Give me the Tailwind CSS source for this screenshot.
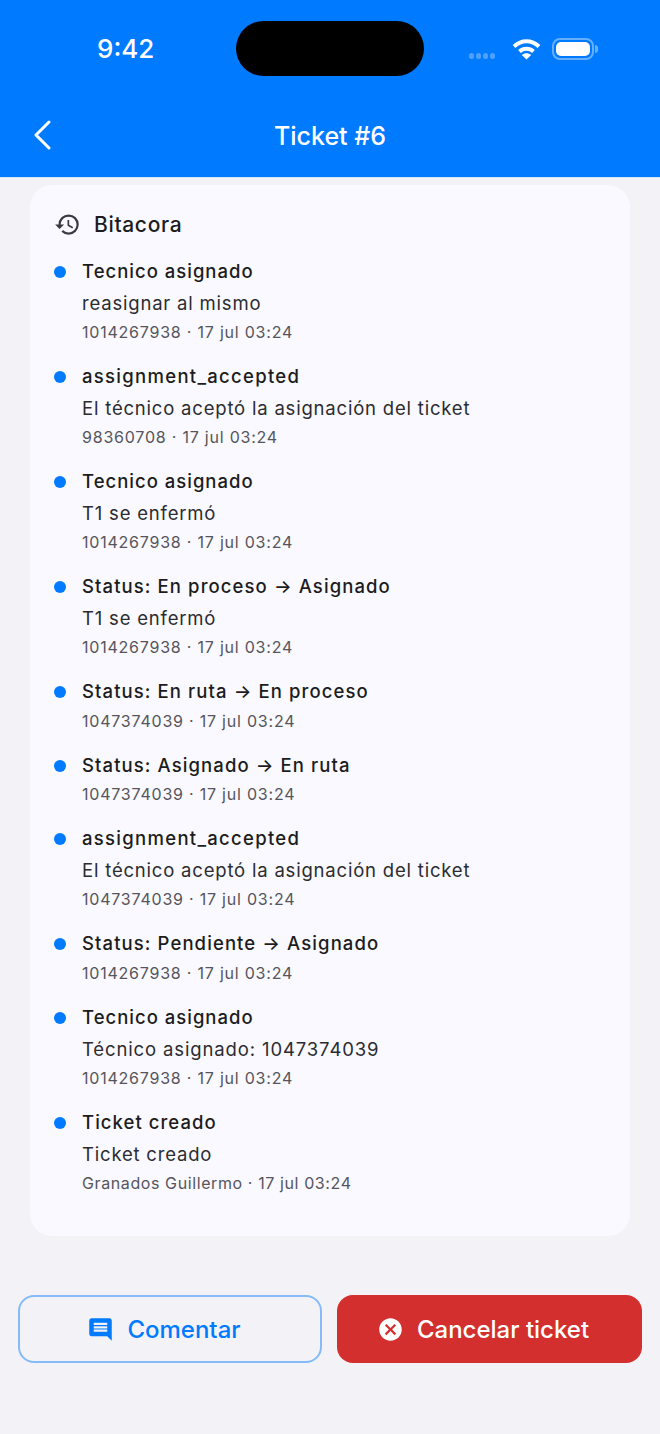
<!DOCTYPE html>
<html lang="es">
<head>
<meta charset="UTF-8">
<title>Ticket #6</title>
<script src="https://cdn.jsdelivr.net/npm/@tailwindcss/browser@4"></script>
</head>
<body class="w-[660px] h-[1434px] overflow-hidden bg-[#f2f2f7] font-['Inter',sans-serif]">
  <!-- header -->
  <header class="h-[178px] bg-[#007aff] border-b border-[#d5e6f7] text-white">
    <div class="relative h-[98px]">
      <span class="absolute left-[97px] top-[33px] text-[26px] leading-[32px] font-medium">9:42</span>
      <div class="absolute left-[236px] top-[21px] w-[188px] h-[55px] rounded-full bg-black"></div>
      <div class="absolute left-[469px] top-[53px] flex gap-[2px]">
        <span class="w-[5px] h-[6px] rounded-full bg-white/30"></span>
        <span class="w-[5px] h-[6px] rounded-full bg-white/30"></span>
        <span class="w-[5px] h-[6px] rounded-full bg-white/30"></span>
        <span class="w-[5px] h-[6px] rounded-full bg-white/30"></span>
      </div>
      <svg class="absolute left-[512px] top-[37px]" width="29" height="23" viewBox="0 0 29 23" fill="none" stroke="white" stroke-width="4">
        <path d="M2 9.5C9.5 2.5 19.5 2.5 27 9.5"/>
        <path d="M7.5 14.5C11.5 10.8 17.5 10.8 21.5 14.5"/>
        <path d="M14.5 22.5L9.8 18C12.5 15.8 16.5 15.8 19.2 18Z" fill="white" stroke="none"/>
      </svg>
      <div class="absolute left-[552px] top-[38px] w-[42px] h-[22px] rounded-[8px] border-2 border-white/40 p-[2px]">
        <div class="w-full h-full rounded-[5px] bg-white"></div>
      </div>
      <div class="absolute left-[595px] top-[45px] w-[3px] h-[8px] rounded-r-full bg-white/40"></div>
    </div>
    <div class="relative h-[60px] flex items-center justify-center pt-[15px]">
      <svg class="absolute left-[32px] top-[22px]" width="20" height="30" viewBox="0 0 20 30" fill="none" stroke="white" stroke-width="3" stroke-linecap="round" stroke-linejoin="round">
        <path d="M17 2L4 15L17 28"/>
      </svg>
      <h1 class="text-[25px] leading-[32px] font-medium">Ticket #6</h1>
    </div>
  </header>

  <main class="px-[30px] pt-[7px]">
    <section class="h-[1051px] rounded-[22px] bg-[#f9f9ff] pl-[24px] pr-[24px] pt-[26px]">
      <div class="flex items-center h-[27px] gap-[13px]">
        <svg class="w-[27px] h-[27px] text-[#3a3a3f]" viewBox="0 0 24 24" fill="currentColor">
          <path d="M13 3a9 9 0 0 0-9 9H1l3.89 3.89.07.14L9 12H6c0-3.87 3.13-7 7-7s7 3.13 7 7-3.13 7-7 7c-1.93 0-3.68-.79-4.94-2.06l-1.42 1.42A8.954 8.954 0 0 0 13 21a9 9 0 0 0 0-18zm-1 5v5l4.28 2.54.72-1.21-3.5-2.08V8H12z"/>
        </svg>
        <h2 class="text-[21px] leading-[27px] font-medium tracking-[0.65px] text-[#1c1c20]">Bitacora</h2>
      </div>

      <ul class="mt-[21px] flex flex-col gap-[21px] text-[#1c1c20]">
        <li class="flex">
          <span class="mt-[7px] w-[12px] h-[12px] rounded-full bg-[#007aff]"></span>
          <div class="ml-[16px]">
            <p class="text-[18.5px] leading-[24px] font-[550] tracking-[1px]">Tecnico asignado</p>
            <p class="mt-[8px] text-[18.5px] leading-[24px] tracking-[0.8px] text-[#2c2c30]">reasignar al mismo</p>
            <p class="mt-[6px] text-[16px] leading-[22px] tracking-[0.78px] text-[#55555b]">1014267938 · 17 jul 03:24</p>
          </div>
        </li>
        <li class="flex">
          <span class="mt-[7px] w-[12px] h-[12px] rounded-full bg-[#007aff]"></span>
          <div class="ml-[16px]">
            <p class="text-[18.5px] leading-[24px] font-[550] tracking-[1.3px]">assignment_accepted</p>
            <p class="mt-[8px] text-[18.5px] leading-[24px] tracking-[0.8px] text-[#2c2c30]">El técnico aceptó la asignación del ticket</p>
            <p class="mt-[6px] text-[16px] leading-[22px] tracking-[0.78px] text-[#55555b]">98360708 · 17 jul 03:24</p>
          </div>
        </li>
        <li class="flex">
          <span class="mt-[7px] w-[12px] h-[12px] rounded-full bg-[#007aff]"></span>
          <div class="ml-[16px]">
            <p class="text-[18.5px] leading-[24px] font-[550] tracking-[1px]">Tecnico asignado</p>
            <p class="mt-[8px] text-[18.5px] leading-[24px] tracking-[0.8px] text-[#2c2c30]">T1 se enfermó</p>
            <p class="mt-[6px] text-[16px] leading-[22px] tracking-[0.78px] text-[#55555b]">1014267938 · 17 jul 03:24</p>
          </div>
        </li>
        <li class="flex">
          <span class="mt-[7px] w-[12px] h-[12px] rounded-full bg-[#007aff]"></span>
          <div class="ml-[16px]">
            <p class="text-[18.5px] leading-[24px] font-[550] tracking-[1.1px]">Status: En proceso → Asignado</p>
            <p class="mt-[8px] text-[18.5px] leading-[24px] tracking-[0.8px] text-[#2c2c30]">T1 se enfermó</p>
            <p class="mt-[6px] text-[16px] leading-[22px] tracking-[0.78px] text-[#55555b]">1014267938 · 17 jul 03:24</p>
          </div>
        </li>
        <li class="flex">
          <span class="mt-[7px] w-[12px] h-[12px] rounded-full bg-[#007aff]"></span>
          <div class="ml-[16px]">
            <p class="text-[18.5px] leading-[24px] font-[550] tracking-[1.1px]">Status: En ruta → En proceso</p>
            <p class="mt-[6.7px] text-[16px] leading-[22px] tracking-[0.78px] text-[#55555b]">1047374039 · 17 jul 03:24</p>
          </div>
        </li>
        <li class="flex">
          <span class="mt-[7px] w-[12px] h-[12px] rounded-full bg-[#007aff]"></span>
          <div class="ml-[16px]">
            <p class="text-[18.5px] leading-[24px] font-[550] tracking-[1.1px]">Status: Asignado → En ruta</p>
            <p class="mt-[6.7px] text-[16px] leading-[22px] tracking-[0.78px] text-[#55555b]">1047374039 · 17 jul 03:24</p>
          </div>
        </li>
        <li class="flex">
          <span class="mt-[7px] w-[12px] h-[12px] rounded-full bg-[#007aff]"></span>
          <div class="ml-[16px]">
            <p class="text-[18.5px] leading-[24px] font-[550] tracking-[1.3px]">assignment_accepted</p>
            <p class="mt-[8px] text-[18.5px] leading-[24px] tracking-[0.8px] text-[#2c2c30]">El técnico aceptó la asignación del ticket</p>
            <p class="mt-[6px] text-[16px] leading-[22px] tracking-[0.78px] text-[#55555b]">1047374039 · 17 jul 03:24</p>
          </div>
        </li>
        <li class="flex">
          <span class="mt-[7px] w-[12px] h-[12px] rounded-full bg-[#007aff]"></span>
          <div class="ml-[16px]">
            <p class="text-[18.5px] leading-[24px] font-[550] tracking-[1.1px]">Status: Pendiente → Asignado</p>
            <p class="mt-[6.7px] text-[16px] leading-[22px] tracking-[0.78px] text-[#55555b]">1014267938 · 17 jul 03:24</p>
          </div>
        </li>
        <li class="flex">
          <span class="mt-[7px] w-[12px] h-[12px] rounded-full bg-[#007aff]"></span>
          <div class="ml-[16px]">
            <p class="text-[18.5px] leading-[24px] font-[550] tracking-[1px]">Tecnico asignado</p>
            <p class="mt-[7.5px] text-[18.5px] leading-[24px] tracking-[0.87px] text-[#2c2c30]">Técnico asignado: 1047374039</p>
            <p class="mt-[6.5px] text-[16px] leading-[22px] tracking-[0.78px] text-[#55555b]">1014267938 · 17 jul 03:24</p>
          </div>
        </li>
        <li class="flex">
          <span class="mt-[7px] w-[12px] h-[12px] rounded-full bg-[#007aff]"></span>
          <div class="ml-[16px]">
            <p class="text-[18.5px] leading-[24px] font-[550] tracking-[1.05px]">Ticket creado</p>
            <p class="mt-[7.5px] text-[18.5px] leading-[24px] tracking-[0.8px] text-[#2c2c30]">Ticket creado</p>
            <p class="mt-[6.5px] text-[16px] leading-[22px] tracking-[0.6px] text-[#55555b]">Granados Guillermo · 17 jul 03:24</p>
          </div>
        </li>
      </ul>
    </section>
  </main>

  <div class="mt-[59px] px-[18px] flex gap-[15px]">
    <button class="w-[304px] h-[68px] pr-[12px] pt-[1px] rounded-[16px] border-2 border-[#84bbf8] flex items-center justify-center gap-[13px] text-[#007aff]">
      <svg class="w-[27px] h-[27px]" viewBox="0 0 24 24" fill="currentColor">
        <path d="M21.99 4c0-1.1-.89-2-1.99-2H4c-1.1 0-2 .9-2 2v12c0 1.1.9 2 2 2h14l4 4-.01-18zM18 14H6v-2h12v2zm0-3H6V9h12v2zm0-3H6V6h12v2z"/>
      </svg>
      <span class="text-[24px] leading-[30px] font-medium">Comentar</span>
    </button>
    <button class="w-[305px] h-[68px] pr-[13px] pt-[1px] rounded-[16px] bg-[#d32f2f] flex items-center justify-center gap-[13px] text-white">
      <svg class="w-[27px] h-[27px]" viewBox="0 0 24 24" fill="currentColor">
        <path d="M12 2C6.47 2 2 6.47 2 12s4.47 10 10 10 10-4.47 10-10S17.53 2 12 2zm5 13.59L15.59 17 12 13.41 8.41 17 7 15.59 10.59 12 7 8.41 8.41 7 12 10.59 15.59 7 17 8.41 13.41 12 17 15.59z"/>
      </svg>
      <span class="text-[24px] leading-[30px] font-medium">Cancelar ticket</span>
    </button>
  </div>
</body>
</html>
